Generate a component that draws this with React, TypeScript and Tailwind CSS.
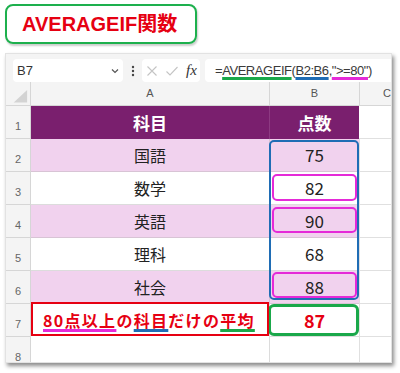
import React from "react";

const JP = "font-['Noto_Sans_CJK_JP',sans-serif]";
const LAT = "font-['Liberation_Sans','Noto_Sans_CJK_JP',sans-serif]";

type Row = { a: string; b: string; pink?: boolean };
const rows: Row[] = [
  { a: "国語", b: "75", pink: true },
  { a: "数学", b: "82" },
  { a: "英語", b: "90", pink: true },
  { a: "理科", b: "68" },
  { a: "社会", b: "88", pink: true },
];

function RowHead({ n }: { n: number }) {
  return (
    <div className={`w-[25px] shrink-0 bg-[#f4f4f4] border-r border-b border-[#d6d6d6] flex items-end justify-center pb-[4px] text-[11px] text-[#666] ${LAT}`}>
      {n}
    </div>
  );
}

export default function App() {
  return (
    <div className="w-[400px] h-[373px] bg-white overflow-hidden flex flex-col">
      <div className="pt-[4px] pl-[5px]">
        <div className={`w-[192px] h-[40px] border-[2.5px] border-[#1db04d] rounded-[8px] flex items-center pl-[15px] shadow-[1px_2px_2px_rgba(0,0,0,0.2)] text-[20px] font-bold text-[#e60012] ${LAT}`}>
          AVERAGEIF関数
        </div>
      </div>

      <div className="mt-[9px] ml-[5px] w-[387px] h-[310px] bg-[#f4f4f4] border border-[#e2e2e2] shadow-[2px_3px_4px_rgba(0,0,0,0.45)] flex flex-col overflow-hidden">
        {/* formula bar */}
        <div className="pt-[5px] pl-[7px] flex items-center h-[29px]">
          <div className={`w-[110px] h-[23px] bg-white rounded-[4px] flex items-center justify-between pl-[4px] pr-[3px] text-[13px] text-[#333] ${LAT}`}>
            <span>B7</span>
            <svg width="10" height="10" viewBox="0 0 10 10">
              <path d="M2 3.5 L5 6.5 L8 3.5" fill="none" stroke="#555" strokeWidth="1.2" />
            </svg>
          </div>
          <div className="w-[19px] flex justify-center">
            <svg width="4" height="12" viewBox="0 0 4 12">
              <circle cx="2" cy="2" r="1.2" fill="#444" />
              <circle cx="2" cy="6" r="1.2" fill="#444" />
              <circle cx="2" cy="10" r="1.2" fill="#444" />
            </svg>
          </div>
          <div className="w-[58px] h-[23px] bg-white rounded-[4px] flex items-center pl-[4px] gap-[7px]">
            <svg width="12" height="12" viewBox="0 0 12 12">
              <path d="M1.5 1.5 L10.5 10.5 M10.5 1.5 L1.5 10.5" stroke="#c4c4c4" strokeWidth="1.1" fill="none" />
            </svg>
            <svg width="14" height="12" viewBox="0 0 14 12">
              <path d="M1.5 6.5 L5 10 L12.5 2" stroke="#c4c4c4" strokeWidth="1.1" fill="none" />
            </svg>
            <span className="font-['Liberation_Serif',serif] italic text-[15px] text-[#333] leading-none">fx</span>
          </div>
          <div className={`ml-[5px] flex-1 h-[23px] bg-white rounded-l-[4px] flex items-center pl-[10px] text-[13px] tracking-[-0.45px] text-[#3a3a3a] ${LAT}`}>
            <span>=</span>
            <span className="underline decoration-[#1aa84a] decoration-[3px] underline-offset-[2px]">AVERAGEIF</span>
            <span>(</span>
            <span className="underline decoration-[#1f6db5] decoration-[3px] underline-offset-[2px]">B2:B6</span>
            <span>,</span>
            <span className="underline decoration-[#e52ad8] decoration-[3px] underline-offset-[2px]">"&gt;=80"</span>
            <span>)</span>
          </div>
        </div>

        {/* column headers */}
        <div className={`flex h-[24px] text-[11px] text-[#555] ${LAT}`}>
          <div className="w-[25px] shrink-0 border-r border-b border-[#d6d6d6] flex items-end">
            <svg width="25" height="24" viewBox="0 0 25 24">
              <polygon points="8,22 22,22 22,9" fill="#d3d3d3" />
            </svg>
          </div>
          <div className="w-[238px] shrink-0 border-b border-[#d6d6d6] flex items-center justify-center">A</div>
          <div className="w-[90px] shrink-0 border-l border-b border-[#d6d6d6] flex items-center justify-center">B</div>
          <div className="flex-1 border-l border-b border-[#d6d6d6] flex items-center justify-start pl-[23px]">C</div>
        </div>

        {/* grid */}
        <div className="relative flex flex-col">
          {/* row 1 header */}
          <div className="flex h-[33px]">
            <RowHead n={1} />
            <div className={`w-[328px] shrink-0 bg-[#7a1f6e] flex text-white font-bold text-[17px] ${JP}`}>
              <div className="w-[238px] flex items-center justify-center">科目</div>
              <div className="w-[90px] border-l border-[#8d3a82] flex items-center justify-center">点数</div>
            </div>
            <div className="flex-1 bg-white border-b border-[#e0e0e0]" />
          </div>

          {rows.map((r, i) => (
            <div key={i} className="flex h-[33px]">
              <RowHead n={i + 2} />
              <div className={`w-[238px] shrink-0 border-b flex items-center justify-center text-[16px] text-[#222] ${JP} ${r.pink ? "bg-[#f1d2ee] border-[#d8c4d5]" : "bg-white border-[#dcdcdc]"}`}>
                {r.a}
              </div>
              <div className={`w-[90px] shrink-0 border-b border-l flex items-center justify-center text-[17px] text-[#222] ${JP} ${r.pink ? "bg-[#f1d2ee] border-[#d8c4d5]" : "bg-white border-[#dcdcdc]"}`}>
                {r.b}
              </div>
              <div className="flex-1 bg-white border-b border-l border-[#e0e0e0]" />
            </div>
          ))}

          {/* row 7 */}
          <div className="flex h-[33px]">
            <RowHead n={7} />
            <div className={`w-[238px] shrink-0 bg-white flex items-center pl-[12px] pb-[2px] text-[16px] tracking-[1.3px] font-bold text-[#e60012] ${JP}`}>
              <span className="underline decoration-[#e52ad8] decoration-[3px] underline-offset-[2px]">80点以上</span>
              <span>の</span>
              <span className="underline decoration-[#1f6db5] decoration-[3px] underline-offset-[2px]">科目</span>
              <span>だけの</span>
              <span className="underline decoration-[#1aa84a] decoration-[3px] underline-offset-[2px]">平均</span>
            </div>
            <div className={`w-[90px] shrink-0 bg-white border-l border-b border-[#dcdcdc] flex items-center justify-center text-[18px] font-bold text-[#e60012] ${JP}`}>
              87
            </div>
            <div className="flex-1 bg-white border-b border-l border-[#e0e0e0]" />
          </div>

          {/* row 8 */}
          <div className="flex h-[33px]">
            <RowHead n={8} />
            <div className="w-[238px] shrink-0 bg-white border-b border-[#dcdcdc]" />
            <div className="w-[90px] shrink-0 bg-white border-l border-b border-[#dcdcdc]" />
            <div className="flex-1 bg-white border-b border-l border-[#e0e0e0]" />
          </div>

          {/* annotation overlays */}
          <div className="absolute left-[263px] top-[34px] w-[90px] h-[160px] border-2 border-[#1f6db5] rounded-[5px]" />
          <div className="absolute left-[266px] top-[68px] w-[85px] h-[27px] border-2 border-[#e52ad8] rounded-[5px]" />
          <div className="absolute left-[266px] top-[101px] w-[85px] h-[26px] border-2 border-[#e52ad8] rounded-[5px]" />
          <div className="absolute left-[266px] top-[166px] w-[85px] h-[26px] border-2 border-[#e52ad8] rounded-[5px]" />
          <div className="absolute left-[262px] top-[198px] w-[91px] h-[32px] border-[3px] border-[#1aa84a] rounded-[6px]" />
          <div className="absolute left-[25px] top-[196px] w-[238px] h-[34px] border-2 border-[#e60012]" />
        </div>
      </div>
    </div>
  );
}
